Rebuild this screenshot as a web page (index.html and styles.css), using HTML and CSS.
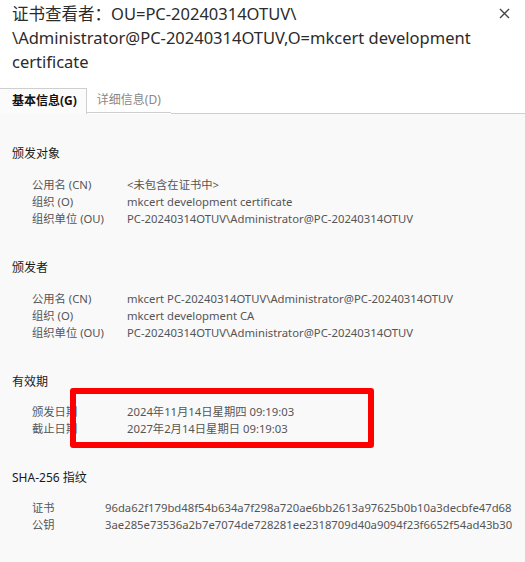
FILE: index.html
```html
<!DOCTYPE html>
<html lang="zh-CN">
<head>
<meta charset="utf-8">
<link rel="stylesheet" href="styles.css">
</head>
<body>
<div class="header">
  <div class="title">证书查看者：OU=PC-20240314OTUV\<br>\Administrator@PC-20240314OTUV,O=mkcert development certificate</div>
  <div class="close"><svg width="11" height="11" viewBox="0 0 11 11"><path d="M1 1L10 10M10 1L1 10" stroke="#444" stroke-width="1.4" fill="none"/></svg></div>
</div>
<div class="tabs">
  <div class="tab active">基本信息(G)</div>
  <div class="tab">详细信息(D)</div>
  <div class="tab-fill"></div>
</div>
<div class="content">
  <section class="section">
    <h2 class="heading">颁发对象</h2>
    <div class="rows">
      <div class="row"><span class="label">公用名 (CN)</span><span class="value">&lt;未包含在证书中&gt;</span></div>
      <div class="row"><span class="label">组织 (O)</span><span class="value">mkcert development certificate</span></div>
      <div class="row"><span class="label">组织单位 (OU)</span><span class="value">PC-20240314OTUV\Administrator@PC-20240314OTUV</span></div>
    </div>
  </section>
  <section class="section">
    <h2 class="heading">颁发者</h2>
    <div class="rows">
      <div class="row"><span class="label">公用名 (CN)</span><span class="value">mkcert PC-20240314OTUV\Administrator@PC-20240314OTUV</span></div>
      <div class="row"><span class="label">组织 (O)</span><span class="value">mkcert development CA</span></div>
      <div class="row"><span class="label">组织单位 (OU)</span><span class="value">PC-20240314OTUV\Administrator@PC-20240314OTUV</span></div>
    </div>
  </section>
  <section class="section validity">
    <h2 class="heading">有效期</h2>
    <div class="rows">
      <div class="row"><span class="label">颁发日期</span><span class="value">2024年11月14日星期四 09:19:03</span></div>
      <div class="row"><span class="label">截止日期</span><span class="value">2027年2月14日星期日 09:19:03</span></div>
    </div>
    <div class="highlight"></div>
  </section>
  <section class="section">
    <h2 class="heading">SHA-256 指纹</h2>
    <div class="rows">
      <div class="row"><span class="label short">证书</span><span class="value">96da62f179bd48f54b634a7f298a720ae6bb2613a97625b0b10a3decbfe47d68</span></div>
      <div class="row"><span class="label short">公钥</span><span class="value">3ae285e73536a2b7e7074de728281ee2318709d40a9094f23f6652f54ad43b30</span></div>
    </div>
  </section>
</div>
</body>
</html>
```

FILE: styles.css
```css
html, body {
  margin: 0;
  padding: 0;
}
body {
  width: 525px;
  height: 562px;
  overflow: hidden;
  background: #f9f9fa;
  font-family: "Noto Sans", "Noto Sans CJK SC", sans-serif;
  color: #222;
}
.header {
  background: #ffffff;
  display: flex;
  justify-content: space-between;
  padding: 2px 12px 0 12px;
}
.title {
  font-size: 16.5px;
  line-height: 24px;
  color: #2b2b2b;
  width: 475px;
}
.close {
  padding-top: 6px;
  padding-right: 3px;
}
.close svg {
  display: block;
}
.tabs {
  background: #ffffff;
  display: flex;
  padding-top: 14px;
}
.tab {
  height: 24px;
  line-height: 24px;
  font-size: 12px;
  padding: 0 10px 0 10px;
  color: #888;
  border-bottom: 1px solid #cfcfcf;
}
.tab.active {
  font-weight: bold;
  color: #111;
  border: 1px solid #cfcfcf;
  border-left: none;
  border-bottom: none;
  background: #fbfbfb;
  padding: 0 9px 1px 12px;
}
.tab-fill {
  flex: 1;
  border-bottom: 1px solid #cfcfcf;
}
.content {
  padding: 31px 12px 0 12px;
  font-size: 11.3px;
  line-height: 17px;
}
.section {
  margin-bottom: 32px;
  position: relative;
}
.heading {
  margin: 0 0 14px 0;
  font-size: 12px;
  font-weight: normal;
  line-height: 17px;
  color: #1a1a1a;
}
.validity .heading,
.section:last-child .heading {
  margin-bottom: 13px;
}
.rows {
  padding-left: 20px;
}
.row {
  display: flex;
  color: #555;
  white-space: nowrap;
}
.label {
  width: 95px;
  flex: none;
}
.label.short {
  width: 73px;
}
.highlight {
  position: absolute;
  left: 58px;
  top: 15px;
  width: 292px;
  height: 48px;
  border: 6px solid #ff0000;
  border-radius: 3px;
}
```
